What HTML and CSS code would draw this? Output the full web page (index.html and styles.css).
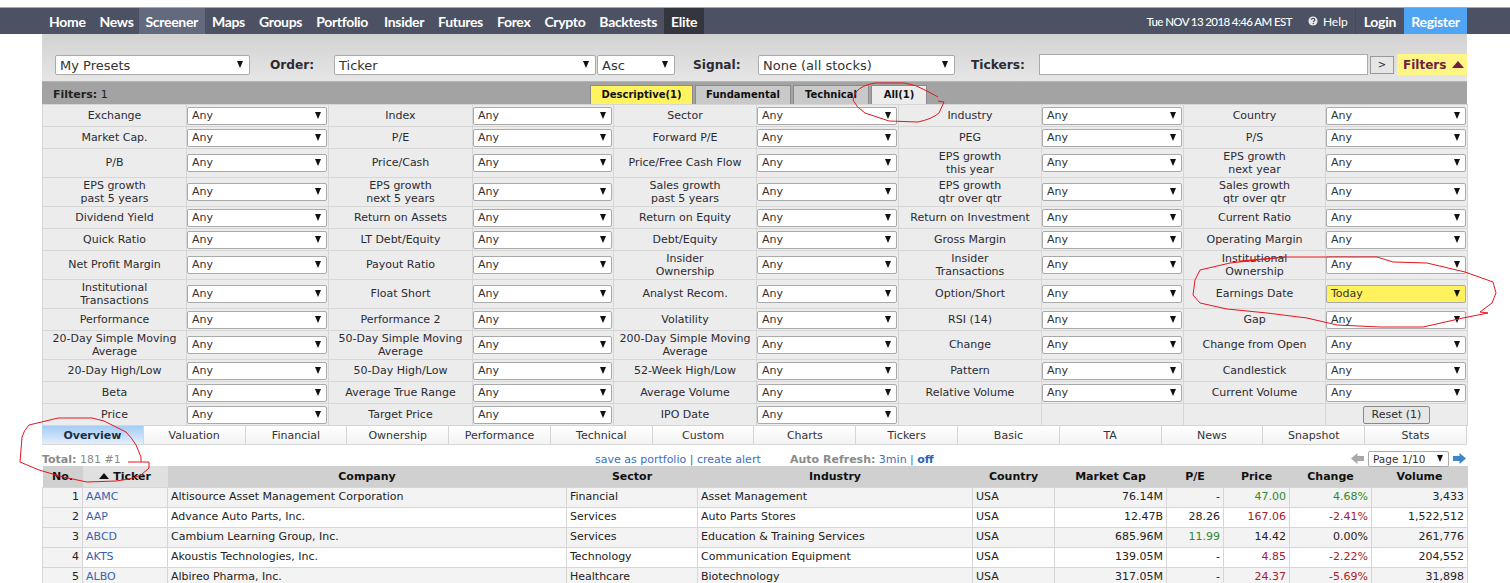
FILE: index.html
```html
<!DOCTYPE html>
<html lang="en">
<head>
<meta charset="utf-8">
<title>Stock Screener</title>
<link rel="stylesheet" href="styles.css">
</head>
<body>
<header class="nav">
  <nav class="nav-left">
    <a class="nav-item">Home</a><a class="nav-item">News</a><a class="nav-item nav-active">Screener</a><a class="nav-item">Maps</a><a class="nav-item">Groups</a><a class="nav-item">Portfolio</a><a class="nav-item nav-insider">Insider</a><a class="nav-item">Futures</a><a class="nav-item">Forex</a><a class="nav-item">Crypto</a><a class="nav-item">Backtests</a><a class="nav-item nav-elite">Elite</a>
  </nav>
  <div class="nav-right">
    <span class="nav-date">Tue NOV 13 2018 4:46 AM EST</span>
    <span class="nav-help"><svg class="help-icon" viewBox="0 0 12 12"><circle cx="6" cy="6" r="5.5" fill="#e8e8ec"/><path d="M4 4.6C4 3.4 5 2.8 6 2.8s2.1.6 2.1 1.7c0 1.5-1.6 1.4-1.6 2.7" fill="none" stroke="#4c5263" stroke-width="1.4"/><rect x="5.6" y="8.2" width="1.5" height="1.5" fill="#4c5263"/></svg>Help</span>
    <a class="nav-login">Login</a><a class="nav-register">Register</a>
  </div>
</header>

<main class="page">
  <section class="presets">
    <div class="sel sel-big sel-presets">My Presets</div>
    <b class="plabel plabel-order">Order:</b>
    <div class="sel sel-big sel-order">Ticker</div>
    <div class="sel sel-big sel-asc">Asc</div>
    <b class="plabel plabel-signal">Signal:</b>
    <div class="sel sel-big sel-signal">None (all stocks)</div>
    <b class="plabel plabel-tickers">Tickers:</b>
    <div class="ticker-input"></div>
    <div class="go">&gt;</div>
    <div class="filters-btn">Filters<span class="tri-up"></span></div>
  </section>

  <section class="fbar">
    <span class="fcount"><b>Filters:</b> 1</span>
    <div class="ftabs">
      <span class="ftab ftab-yellow">Descriptive(1)</span>
      <span class="ftab ftab-f">Fundamental</span>
      <span class="ftab ftab-t">Technical</span>
      <span class="ftab ftab-all">All(1)</span>
    </div>
  </section>

  <table class="filters">
    <colgroup><col class="fc144"><col class="fc142"><col class="fc144"><col class="fc141"><col class="fc143"><col class="fc142"><col class="fc143"><col class="fc142"><col class="fc142"><col class="fc142"></colgroup>
    <tr class="r1"><td>Exchange</td><td><div class="sel">Any</div></td><td>Index</td><td><div class="sel">Any</div></td><td>Sector</td><td><div class="sel">Any</div></td><td>Industry</td><td><div class="sel">Any</div></td><td>Country</td><td><div class="sel">Any</div></td></tr>
    <tr class="r1"><td>Market Cap.</td><td><div class="sel">Any</div></td><td>P/E</td><td><div class="sel">Any</div></td><td>Forward P/E</td><td><div class="sel">Any</div></td><td>PEG</td><td><div class="sel">Any</div></td><td>P/S</td><td><div class="sel">Any</div></td></tr>
    <tr class="r2"><td>P/B</td><td><div class="sel">Any</div></td><td>Price/Cash</td><td><div class="sel">Any</div></td><td>Price/Free Cash Flow</td><td><div class="sel">Any</div></td><td>EPS growth<br>this year</td><td><div class="sel">Any</div></td><td>EPS growth<br>next year</td><td><div class="sel">Any</div></td></tr>
    <tr class="r2"><td>EPS growth<br>past 5 years</td><td><div class="sel">Any</div></td><td>EPS growth<br>next 5 years</td><td><div class="sel">Any</div></td><td>Sales growth<br>past 5 years</td><td><div class="sel">Any</div></td><td>EPS growth<br>qtr over qtr</td><td><div class="sel">Any</div></td><td>Sales growth<br>qtr over qtr</td><td><div class="sel">Any</div></td></tr>
    <tr class="r1"><td>Dividend Yield</td><td><div class="sel">Any</div></td><td>Return on Assets</td><td><div class="sel">Any</div></td><td>Return on Equity</td><td><div class="sel">Any</div></td><td>Return on Investment</td><td><div class="sel">Any</div></td><td>Current Ratio</td><td><div class="sel">Any</div></td></tr>
    <tr class="r1"><td>Quick Ratio</td><td><div class="sel">Any</div></td><td>LT Debt/Equity</td><td><div class="sel">Any</div></td><td>Debt/Equity</td><td><div class="sel">Any</div></td><td>Gross Margin</td><td><div class="sel">Any</div></td><td>Operating Margin</td><td><div class="sel">Any</div></td></tr>
    <tr class="r2"><td>Net Profit Margin</td><td><div class="sel">Any</div></td><td>Payout Ratio</td><td><div class="sel">Any</div></td><td>Insider<br>Ownership</td><td><div class="sel">Any</div></td><td>Insider<br>Transactions</td><td><div class="sel">Any</div></td><td>Institutional<br>Ownership</td><td><div class="sel">Any</div></td></tr>
    <tr class="r2"><td>Institutional<br>Transactions</td><td><div class="sel">Any</div></td><td>Float Short</td><td><div class="sel">Any</div></td><td>Analyst Recom.</td><td><div class="sel">Any</div></td><td>Option/Short</td><td><div class="sel">Any</div></td><td>Earnings Date</td><td><div class="sel sel-on">Today</div></td></tr>
    <tr class="r1"><td>Performance</td><td><div class="sel">Any</div></td><td>Performance 2</td><td><div class="sel">Any</div></td><td>Volatility</td><td><div class="sel">Any</div></td><td>RSI (14)</td><td><div class="sel">Any</div></td><td>Gap</td><td><div class="sel">Any</div></td></tr>
    <tr class="r2"><td>20-Day Simple Moving<br>Average</td><td><div class="sel">Any</div></td><td>50-Day Simple Moving<br>Average</td><td><div class="sel">Any</div></td><td>200-Day Simple Moving<br>Average</td><td><div class="sel">Any</div></td><td>Change</td><td><div class="sel">Any</div></td><td>Change from Open</td><td><div class="sel">Any</div></td></tr>
    <tr class="r1"><td>20-Day High/Low</td><td><div class="sel">Any</div></td><td>50-Day High/Low</td><td><div class="sel">Any</div></td><td>52-Week High/Low</td><td><div class="sel">Any</div></td><td>Pattern</td><td><div class="sel">Any</div></td><td>Candlestick</td><td><div class="sel">Any</div></td></tr>
    <tr class="r1"><td>Beta</td><td><div class="sel">Any</div></td><td>Average True Range</td><td><div class="sel">Any</div></td><td>Average Volume</td><td><div class="sel">Any</div></td><td>Relative Volume</td><td><div class="sel">Any</div></td><td>Current Volume</td><td><div class="sel">Any</div></td></tr>
    <tr class="r1"><td>Price</td><td><div class="sel">Any</div></td><td>Target Price</td><td><div class="sel">Any</div></td><td>IPO Date</td><td><div class="sel">Any</div></td><td></td><td></td><td></td><td class="reset-cell"><span class="reset">Reset (1)</span></td></tr>
  </table>

  <nav class="views">
    <a class="view view-on">Overview</a><a class="view">Valuation</a><a class="view">Financial</a><a class="view">Ownership</a><a class="view">Performance</a><a class="view">Technical</a><a class="view">Custom</a><a class="view">Charts</a><a class="view">Tickers</a><a class="view">Basic</a><a class="view">TA</a><a class="view">News</a><a class="view">Snapshot</a><a class="view">Stats</a>
  </nav>

  <section class="info">
    <span class="total"><b>Total:</b> 181 #1</span>
    <span class="links">save as portfolio | create alert</span>
    <span class="refresh"><b>Auto Refresh:</b> 3min | <b class="off">off</b></span>
    <span class="pager">
      <svg class="arrow" viewBox="0 0 12 11" preserveAspectRatio="none"><path d="M0 5.5 6 0v3h6v5H6v3z" fill="#a9a9a9"/></svg>
      <span class="sel sel-page">Page 1/10</span>
      <svg class="arrow" viewBox="0 0 12 11" preserveAspectRatio="none"><path d="M12 5.5 6 0v3H0v5h6v3z" fill="#3d85c6"/></svg>
    </span>
  </section>

  <table class="results">
    <colgroup><col class="c-no"><col class="c-tk"><col class="c-co"><col class="c-se"><col class="c-in"><col class="c-cn"><col class="c-mc"><col class="c-pe"><col class="c-pr"><col class="c-ch"><col class="c-vo"></colgroup>
    <thead>
      <tr><th>No.</th><th class="th-sorted"><span class="tri-sort"></span>Ticker</th><th>Company</th><th>Sector</th><th>Industry</th><th>Country</th><th>Market Cap</th><th>P/E</th><th>Price</th><th>Change</th><th>Volume</th></tr>
    </thead>
    <tbody>
      <tr class="odd"><td class="n">1</td><td class="tk">AAMC</td><td>Altisource Asset Management Corporation</td><td>Financial</td><td>Asset Management</td><td>USA</td><td class="n">76.14M</td><td class="n">-</td><td class="n up">47.00</td><td class="n up">4.68%</td><td class="n">3,433</td></tr>
      <tr><td class="n">2</td><td class="tk">AAP</td><td>Advance Auto Parts, Inc.</td><td>Services</td><td>Auto Parts Stores</td><td>USA</td><td class="n">12.47B</td><td class="n">28.26</td><td class="n down">167.06</td><td class="n down">-2.41%</td><td class="n">1,522,512</td></tr>
      <tr class="odd"><td class="n">3</td><td class="tk">ABCD</td><td>Cambium Learning Group, Inc.</td><td>Services</td><td>Education &amp; Training Services</td><td>USA</td><td class="n">685.96M</td><td class="n up">11.99</td><td class="n">14.42</td><td class="n">0.00%</td><td class="n">261,776</td></tr>
      <tr><td class="n">4</td><td class="tk">AKTS</td><td>Akoustis Technologies, Inc.</td><td>Technology</td><td>Communication Equipment</td><td>USA</td><td class="n">139.05M</td><td class="n">-</td><td class="n down">4.85</td><td class="n down">-2.22%</td><td class="n">204,552</td></tr>
      <tr class="odd"><td class="n">5</td><td class="tk">ALBO</td><td>Albireo Pharma, Inc.</td><td>Healthcare</td><td>Biotechnology</td><td>USA</td><td class="n">317.05M</td><td class="n">-</td><td class="n down">24.37</td><td class="n down">-5.69%</td><td class="n">31,898</td></tr>
    </tbody>
  </table>
</main>

<svg class="marks" viewBox="0 0 1510 583" fill="none" stroke="#e8141c" stroke-width="1">
  <path d="M938 97 927 91Q915 84 904 83L875 83Q862 85 856 92L853 100Q856 107 865 113L889 121 918 122Q932 119 939 113L944 102 938 101"/>
  <path d="M128 462H149V468L141 475Q130 480 116 481L87 482 63 477 39 470 20 462 22 437Q24 430 29 425L58 418H92L104 421 126 432Q132 438 136 445L141 457V462"/>
  <path d="M1240 261 1285 257H1377L1393 262 1427 263 1465 272 1493 282 1496 293 1492 303 1480 312 1488 313 1463 318 1423 327 1380 327 1337 325 1307 318 1267 313 1227 309 1200 303 1193 295 1195 280 1200 270 1230 263 1285 257"/>
</svg>
</body>
</html>
```

FILE: styles.css
```css
* { box-sizing: border-box; }
html, body { margin: 0; height: 583px; overflow: hidden; background: #fff; }
body { position: relative; padding-top: 7px; font: 11px "DejaVu Sans", Verdana, sans-serif; color: #2b2b33; }

.nav { height: 27px; border-top: 1px solid #a8a8a8; background: #4c5263; color: #fff; display: flex; justify-content: space-between; padding: 0 43px 0 42px; font-family: "Lato", "Liberation Sans", sans-serif; }
.nav-left, .nav-right { display: flex; align-items: stretch; }
.nav-item { display: flex; align-items: center; padding: 0 7px; font-size: 14px; font-weight: 700; letter-spacing: -0.32px; }
.nav-active { margin-left: -2px; background: #636a7e; }
.nav-insider { margin-left: 2px; }
.nav-elite { background: #33353f; }
.nav-date { align-self: center; font-size: 11.5px; font-weight: 500; letter-spacing: -0.6px; }
.nav-help { align-self: center; display: flex; align-items: center; gap: 5px; margin: 0 7px 0 16px; font-size: 12px; }
.help-icon { width: 10px; height: 10px; }
.nav-login { display: flex; align-items: center; padding: 0 8px; border-left: 1px solid #454a5a; font-size: 14px; font-weight: 700; letter-spacing: -0.3px; }
.nav-register { display: flex; align-items: center; width: 63px; justify-content: center; background: #4fa4f4; font-size: 14px; font-weight: 700; letter-spacing: -0.3px; }

.page { width: 1425px; margin-left: 42px; }

.presets { height: 48px; background: linear-gradient(#d2d2d2, #e6e6e6); border-bottom: 1px solid #b5b5b5; display: flex; align-items: flex-start; padding: 20px 0 0 13px; }
.presets > * { flex: none; }
.plabel { width: 47px; font-size: 12.2px; line-height: 22px; }
.plabel-order { width: 44px; margin: 0 20px; }
.plabel-signal { margin: 0 18px; }
.plabel-tickers { width: 53px; margin: 0 15px 0 16px; }

.sel { position: relative; height: 18px; line-height: 16px; padding-left: 4px; background: #fff; border: 1px solid #aaa; border-radius: 2px; font-size: 11px; color: #333; }
.sel::after { content: ""; position: absolute; right: 5px; top: 4px; border-style: solid; border-width: 7px 3.5px 0; border-color: #111 transparent transparent; }
.sel-big { height: 20px; margin-top: 1px; line-height: 19px; font-size: 13px; }
.sel-big::after { right: 6px; top: 5px; }
.sel-presets { width: 195px; }
.sel-order { width: 262px; }
.sel-asc { width: 78px; margin-left: 1px; }
.sel-signal { width: 197px; }
.sel-on { background: #fff25c; }
.sel-page { display: inline-block; width: 81px; height: 16px; line-height: 14px; font-size: 10.5px; }
.sel-page::after { top: 3px; }

.ticker-input { width: 329px; height: 21px; background: #fff; border: 1px solid #aaa; }
.go { width: 24px; height: 18px; margin: 2px 3px 0 2px; background: #e6e6e6; border: 1px solid #999; text-align: center; line-height: 16px; font-size: 10px; }
.filters-btn { width: 70px; height: 21px; background: #fff685; color: #6e2142; font-size: 12px; font-weight: 700; line-height: 20px; padding-left: 6px; display: flex; align-items: center; gap: 6px; white-space: nowrap; }
.tri-up { border-style: solid; border-width: 0 6px 7px; border-color: transparent transparent #6e2142; }

.fbar { height: 22px; background: #a3a3a3; display: flex; align-items: flex-end; padding-left: 11px; }
.fcount { align-self: center; width: 537px; padding-top: 2px; color: #222; font-size: 11px; }
.ftabs { display: flex; gap: 2px; }
.ftab { height: 19px; line-height: 17px; border: 1px solid #8b8b8b; border-bottom: 0; background: #c9c9c9; color: #111; font-weight: 700; font-size: 10px; text-align: center; }
.ftab-yellow { width: 103px; background: #fff45f; }
.ftab-f { width: 96px; }
.ftab-t { width: 76px; }
.ftab-all { width: 56px; background: #ececec; }

.filters { width: 1425px; table-layout: fixed; border-collapse: collapse; background: #ececec; }
.fc144 { width: 144px; }
.fc143 { width: 143px; }
.fc142 { width: 142px; }
.fc141 { width: 141px; }
.filters td { padding: 0 1px; border: 1px solid #d6d6d6; text-align: center; line-height: 13px; color: #2b2b33; }
.filters td:nth-child(even) { padding-left: 0; }
.filters .r2 td:nth-child(odd):not(:has(br)) { padding-bottom: 2px; }
.filters .sel { text-align: left; }
.r1 { height: 22px; }
.r2 { height: 29px; }
.filters .reset-cell { padding: 0 0 0 2px; }
.reset { display: inline-block; width: 67px; height: 18px; line-height: 16px; background: #e6e6e6; border: 1px solid #888; border-radius: 2px; }

.views { height: 19px; display: flex; border-bottom: 1px solid #d6d6d6; border-right: 1px solid #d6d6d6; background: linear-gradient(#fff, #f3f3f3); }
.view { flex: 1; text-align: center; line-height: 19px; border-left: 1px solid #d6d6d6; color: #333; }
.view-on { border-left: 0; background: linear-gradient(#a5ccf5, #e4effb); font-weight: 700; color: #1c2f48; }

.info { height: 21px; display: flex; align-items: flex-end; color: #8a8a8a; line-height: 13px; }
.total { width: 553px; }
.links { width: 195px; color: #3b6ebd; }
.refresh { color: #3b6ebd; }
.refresh > b:first-child { color: #8a8a8a; }
.off { color: #2a62b8; }
.pager { margin-left: auto; display: flex; align-items: center; gap: 4px; padding-right: 1px; height: 15px; color: #222; }
.arrow { width: 13px; height: 11px; }

.results { width: 1425px; table-layout: fixed; border-collapse: collapse; }
.c-no { width: 40px; }
.c-tk { width: 85px; }
.c-co { width: 399px; }
.c-se { width: 131px; }
.c-in { width: 275px; }
.c-cn { width: 82px; }
.c-mc { width: 112px; }
.c-pe { width: 57px; }
.c-pr { width: 66px; }
.c-ch { width: 82px; }
.c-vo { width: 96px; }
.results th { height: 21px; padding: 0; background: #d0d0d0; color: #111; font-weight: 700; font-size: 11px; text-align: center; }
.results .th-sorted { background: #e0e0e0; }
.tri-sort { display: inline-block; margin-right: 4px; vertical-align: 1px; border-style: solid; border-width: 0 5px 6px; border-color: transparent transparent #111; }
.results td { height: 20px; padding: 0 3px; border: 1px solid #d6d6d6; line-height: 14px; color: #222; white-space: nowrap; }
.results tr > td:first-child { background: #f3f3f3; }
.results .odd td { background: #f3f3f3; }
.results td.n { text-align: right; }
.results td.tk { color: #3b5fae; }
.results td.up { color: #2c8a2c; }
.results td.down { color: #a8202c; }

.marks { position: absolute; left: 0; top: 0; width: 1510px; height: 583px; pointer-events: none; }
```
